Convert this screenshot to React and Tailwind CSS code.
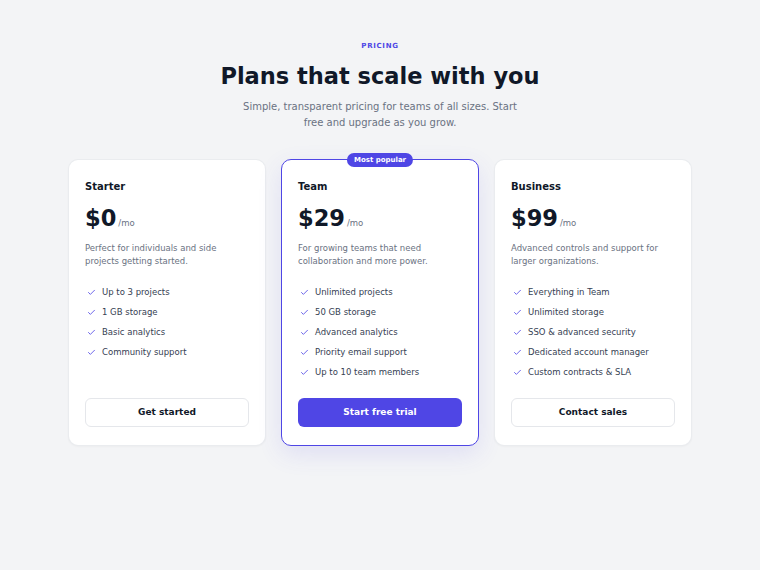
import { Check } from 'lucide-react'

const plans = [
  {
    name: 'Starter',
    price: '$0',
    blurb: 'Perfect for individuals and side projects getting started.',
    features: ['Up to 3 projects', '1 GB storage', 'Basic analytics', 'Community support'],
    cta: 'Get started',
  },
  {
    name: 'Team',
    price: '$29',
    blurb: 'For growing teams that need collaboration and more power.',
    features: ['Unlimited projects', '50 GB storage', 'Advanced analytics', 'Priority email support', 'Up to 10 team members'],
    cta: 'Start free trial',
    popular: true,
  },
  {
    name: 'Business',
    price: '$99',
    blurb: 'Advanced controls and support for larger organizations.',
    features: ['Everything in Team', 'Unlimited storage', 'SSO & advanced security', 'Dedicated account manager', 'Custom contracts & SLA'],
    cta: 'Contact sales',
  },
]

function PlanCard({ plan }) {
  const featured = plan.popular
  return (
    <div
      className={
        featured
          ? 'relative flex flex-col rounded-[10px] border border-[#4f46e5] bg-white px-4 pt-[18px] pb-[18px] shadow-[0_8px_24px_rgba(79,70,229,0.12)]'
          : 'relative flex flex-col rounded-[10px] border border-gray-200/80 bg-white px-4 pt-[18px] pb-[18px] shadow-[0_1px_2px_rgba(0,0,0,0.03)]'
      }
    >
      {featured && (
        <span className="absolute -top-[7px] left-1/2 -translate-x-1/2 rounded-full bg-[#4f46e5] px-[7px] text-[7px] font-bold leading-[14px] text-white">
          Most popular
        </span>
      )}
      <h3 className="text-[10px] font-bold leading-[18px] text-gray-900">{plan.name}</h3>
      <div className="mt-2 flex items-baseline gap-[2px]">
        <span className="text-[22.5px] font-bold leading-[28px] text-gray-900">{plan.price}</span>
        <span className="text-[8.5px] text-gray-500">/mo</span>
      </div>
      <p className="mt-[10px] text-[8.5px] leading-[13px] text-gray-500">{plan.blurb}</p>
      <ul className="mt-[14px] mb-[16px]">
        {plan.features.map((f) => (
          <li key={f} className="flex items-center gap-[6px] text-[8.5px] leading-[20px] text-gray-700">
            <Check size={9} strokeWidth={2.2} className="ml-[2px] text-[#4f46e5]" />
            {f}
          </li>
        ))}
      </ul>
      <button
        className={
          featured
            ? 'mt-auto h-[29px] rounded-md bg-[#4f46e5] text-[9px] font-bold text-white'
            : 'mt-auto h-[29px] rounded-md border border-gray-200 bg-white text-[9px] font-bold text-gray-900'
        }
      >
        {plan.cta}
      </button>
    </div>
  )
}

export default function App() {
  return (
    <div className="min-h-[570px] bg-gray-100 font-['DejaVu_Sans',sans-serif]">
      <div className="flex flex-col items-center pt-[40px]">
        <p className="text-[7px] font-bold uppercase leading-[12px] tracking-[0.1em] text-[#4f46e5]">Pricing</p>
        <h1 className="mt-[9px] text-[22.5px] font-bold leading-[30px] text-gray-900">Plans that scale with you</h1>
        <p className="mt-2 max-w-[282px] text-center text-[10px] leading-4 text-gray-500">
          Simple, transparent pricing for teams of all sizes. Start free and upgrade as you grow.
        </p>
        <div className="mt-7 grid w-[624px] grid-cols-3 gap-[15px]">
          {plans.map((p) => (
            <PlanCard key={p.name} plan={p} />
          ))}
        </div>
      </div>
    </div>
  )
}
